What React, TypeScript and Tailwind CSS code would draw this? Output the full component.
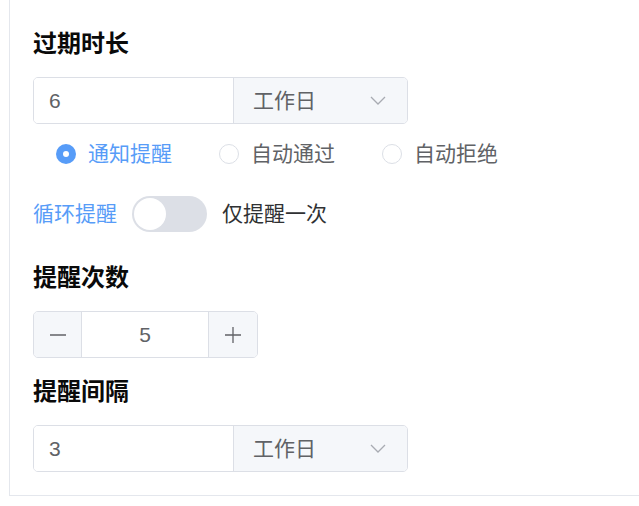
import React from "react";

const FONT = { fontFamily: '"Liberation Sans", "Noto Sans CJK SC", sans-serif' };

function Chevron() {
  return (
    <svg width="16" height="9" viewBox="0 0 16 9" fill="none">
      <path d="M1 1 L8 8 L15 1" stroke="#a8abb2" strokeWidth="1.3" />
    </svg>
  );
}

function InputGroup({ value }: { value: string }) {
  return (
    <div className="flex h-[47px] w-[375px] rounded-[5px] border border-[#dcdfe6] overflow-hidden">
      <div className="flex w-[200px] items-center border-r border-[#dcdfe6] bg-white pl-[15px] text-[21px] text-[#606266]">
        {value}
      </div>
      <div className="flex flex-1 items-center justify-between bg-[#f5f7fa] pl-[19px] pr-[21px] text-[21px] text-[#606266]">
        <span>工作日</span>
        <Chevron />
      </div>
    </div>
  );
}

function Title({ children }: { children: React.ReactNode }) {
  return <div className="h-[24px] text-[24px] font-bold leading-[24px] text-[#0a0a0a]">{children}</div>;
}

function Radio({ label, checked }: { label: string; checked?: boolean }) {
  return (
    <div className="mr-[47px] flex items-center">
      {checked ? (
        <span className="flex h-[20px] w-[20px] items-center justify-center rounded-full bg-[#579cf8]">
          <span className="h-[6px] w-[6px] rounded-full bg-white" />
        </span>
      ) : (
        <span className="h-[20px] w-[20px] rounded-full border border-[#dcdfe6] bg-white" />
      )}
      <span className={"ml-[12px] text-[21px] leading-[30px] " + (checked ? "text-[#579cf8]" : "text-[#606266]")}>
        {label}
      </span>
    </div>
  );
}

export default function App() {
  return (
    <div className="h-[506px] w-[639px] overflow-hidden bg-white pl-[9px]" style={FONT}>
      <div className="border-b border-l border-[#e4e7ed] pb-[23px] pl-[23px] pt-[32px]">
        <Title>过期时长</Title>
        <div className="mt-[21px]">
          <InputGroup value="6" />
        </div>
        <div className="mt-[15px] flex h-[30px] items-center pl-[23px]">
          <Radio label="通知提醒" checked />
          <Radio label="自动通过" />
          <Radio label="自动拒绝" />
        </div>
        <div className="mt-[27px] flex h-[36px] items-center">
          <span className="text-[21px] leading-[30px] text-[#579cf8]">循环提醒</span>
          <span className="ml-[15px] flex h-[36px] w-[75px] items-center rounded-full bg-[#dcdfe6]">
            <span className="ml-[2px] h-[32px] w-[32px] rounded-full bg-white" />
          </span>
          <span className="ml-[15px] text-[21px] leading-[30px] text-[#303133]">仅提醒一次</span>
        </div>
        <div className="mt-[34px]">
          <Title>提醒次数</Title>
        </div>
        <div className="mt-[21px] flex h-[47px] w-[225px] overflow-hidden rounded-[5px] border border-[#dcdfe6]">
          <div className="flex w-[48px] items-center justify-center border-r border-[#dcdfe6] bg-[#f5f7fa]">
            <svg width="18" height="18" viewBox="0 0 18 18">
              <path d="M1 9 H17" stroke="#606266" strokeWidth="1.5" />
            </svg>
          </div>
          <div className="flex flex-1 items-center justify-center bg-white text-[21px] text-[#606266]">5</div>
          <div className="flex w-[49px] items-center justify-center border-l border-[#dcdfe6] bg-[#f5f7fa]">
            <svg width="18" height="18" viewBox="0 0 18 18">
              <path d="M1 9 H17 M9 1 V17" stroke="#606266" strokeWidth="1.3" />
            </svg>
          </div>
        </div>
        <div className="mt-[22px]">
          <Title>提醒间隔</Title>
        </div>
        <div className="mt-[21px]">
          <InputGroup value="3" />
        </div>
      </div>
    </div>
  );
}
